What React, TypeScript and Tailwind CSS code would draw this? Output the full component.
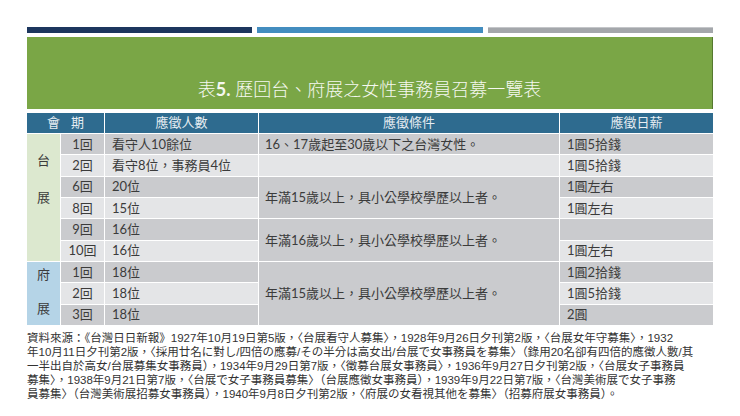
const cjk = "font-['Lato','Noto_Sans_CJK_TC',sans-serif]";

const dark = "bg-[#cacbce]";
const light = "bg-[#e4e5e7]";

function Head({ children, className = "" }: { children: React.ReactNode; className?: string }) {
  return (
    <div className={`flex items-center justify-center bg-[#2e6b8f] text-[13px] text-[#e6edf2] ${className}`}>
      {children}
    </div>
  );
}

function Cell({ children, className = "" }: { children?: React.ReactNode; className?: string }) {
  return <div className={`flex items-center text-[13px] leading-none text-[#3b3b3b] ${className}`}>{children}</div>;
}

const taiRows = [
  { no: "1回", count: "看守人10餘位", pay: "1圓5拾錢" },
  { no: "2回", count: "看守8位，事務員4位", pay: "1圓5拾錢" },
  { no: "6回", count: "20位", pay: "1圓左右" },
  { no: "8回", count: "15位", pay: "1圓左右" },
  { no: "9回", count: "16位", pay: "" },
  { no: "10回", count: "16位", pay: "1圓左右" },
];

const fuRows = [
  { no: "1回", count: "18位", pay: "1圓2拾錢" },
  { no: "2回", count: "18位", pay: "1圓5拾錢" },
  { no: "3回", count: "18位", pay: "2圓" },
];

export default function App() {
  return (
    <div lang="zh-TW" className={`w-[740px] h-[416px] bg-white pt-[27px] px-[27px] ${cjk}`}>
      {/* top bars */}
      <div className="flex gap-[5px] h-[6px]">
        <div className="flex-1 bg-[#1c365e]" />
        <div className="flex-1 bg-[#438dbf]" />
        <div className="flex-1 bg-[#a4a7ab] border-t border-[#c4c6c9]" />
      </div>

      {/* title */}
      <div className="mt-[4px] h-[72px] bg-[#7aa646] border-r border-[#55782f] flex items-end justify-center pb-[8px]">
        <h1 className="text-[18px] leading-[24px] font-light text-[#f5f8f0]">
          表<span className="font-bold">5.</span> 歷回台、府展之女性事務員召募一覽表
        </h1>
      </div>

      {/* table */}
      <div className="mt-[4px] grid grid-cols-[33px_43px_153px_300px_153px] grid-rows-[20px_repeat(9,20.33px)] gap-px bg-white">
        <Head className="col-span-2 gap-[11px]">
          <span>會</span>
          <span>期</span>
        </Head>
        <Head>應徵人數</Head>
        <Head>應徵條件</Head>
        <Head>應徵日薪</Head>

        {taiRows.map((r, i) => {
          const bg = i % 2 === 0 ? dark : light;
          return (
            <>
              {i === 0 && (
                <div className="row-span-6 bg-[#dce8cf] flex flex-col items-center pt-[18px] gap-[21px] text-[13px] leading-[16px] text-[#3b3b3b]">
                  <span>台</span>
                  <span>展</span>
                </div>
              )}
              <Cell className={`${bg} justify-center`}>{r.no}</Cell>
              <Cell className={`${bg} pl-[7px]`}>{r.count}</Cell>
              {i === 0 && <Cell className={`${dark} pl-[6px]`}>16、17歲起至30歲以下之台灣女性。</Cell>}
              {i === 1 && <Cell className={light} />}
              {i === 2 && <Cell className={`${dark} row-span-2 pl-[6px]`}>年滿15歲以上，具小公學校學歷以上者。</Cell>}
              {i === 4 && <Cell className={`${dark} row-span-2 pl-[6px]`}>年滿16歲以上，具小公學校學歷以上者。</Cell>}
              <Cell className={`${bg} pl-[7px]`}>{r.pay}</Cell>
            </>
          );
        })}

        {fuRows.map((r, i) => {
          const bg = i % 2 === 0 ? dark : light;
          return (
            <>
              {i === 0 && (
                <div className="row-span-3 bg-[#b5d4e7] flex flex-col items-center pt-[4px] gap-[18px] text-[13px] leading-[16px] text-[#3b3b3b]">
                  <span>府</span>
                  <span>展</span>
                </div>
              )}
              <Cell className={`${bg} justify-center`}>{r.no}</Cell>
              <Cell className={`${bg} pl-[7px]`}>{r.count}</Cell>
              {i === 0 && <Cell className={`${dark} row-span-3 pl-[6px]`}>年滿15歲以上，具小公學校學歷以上者。</Cell>}
              <Cell className={`${bg} pl-[7px]`}>{r.pay}</Cell>
            </>
          );
        })}
      </div>

      {/* source note */}
      <div className="mt-[6px] font-['Liberation_Sans','Noto_Sans_CJK_TC',sans-serif] text-[11.5px] leading-[14px] text-[#333] whitespace-nowrap">
        <p>資料來源：《台灣日日新報》1927年10月19日第5版，〈台展看守人募集〉，1928年9月26日夕刊第2版，〈台展女年守募集〉，1932</p>
        <p>年10月11日夕刊第2版，〈採用廿名に對し/四倍の應募/その半分は高女出/台展で女事務員を募集〉（錄用20名卻有四倍的應徵人數/其</p>
        <p>一半出自於高女/台展募集女事務員），1934年9月29日第7版，〈徵募台展女事務員〉，1936年9月27日夕刊第2版，〈台展女子事務員</p>
        <p>募集〉，1938年9月21日第7版，〈台展で女子事務員募集〉（台展應徵女事務員），1939年9月22日第7版，〈台灣美術展で女子事務</p>
        <p>員募集〉（台灣美術展招募女事務員），1940年9月8日夕刊第2版，〈府展の女看視其他を募集〉（招募府展女事務員）。</p>
      </div>
    </div>
  );
}
